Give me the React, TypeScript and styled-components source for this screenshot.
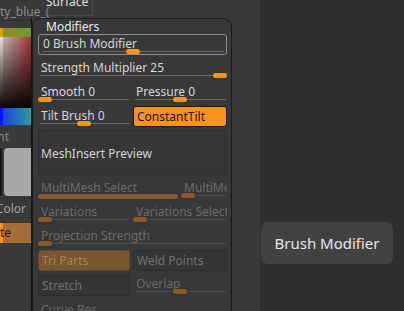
import React from "react";
import styled, { createGlobalStyle } from "styled-components";

const Global = createGlobalStyle`
  html, body {
    margin: 0;
    padding: 0;
    background: #303030;
  }
  body {
    font-family: "Noto Sans", "Open Sans", sans-serif;
    font-size: 12px;
  }
  * {
    box-sizing: border-box;
  }
`;

const Page = styled.div`
  position: relative;
  display: flex;
  width: 404px;
  height: 311px;
  overflow: hidden;
  background: #303030;
`;

const Workspace = styled.div`
  display: flex;
  flex-direction: column;
  width: 260px;
  height: 100%;
  background: #393939;
`;

const Canvas = styled.div`
  flex: 1;
  background: #2f2f2f;
`;

const TopBar = styled.div`
  display: flex;
  height: 18px;
  flex: none;
`;

const DocName = styled.div`
  width: 44px;
  padding-top: 5px;
  line-height: 14px;
  color: #8a8a8a;
  white-space: nowrap;
  position: relative;
  z-index: 1;
`;

const SurfaceTab = styled.div`
  width: 49px;
  height: 16px;
  border-right: 1px solid #4b4b4b;
  border-bottom: 1px solid #4b4b4b;
  overflow: hidden;
`;

const TabText = styled.span`
  display: block;
  margin-top: -5px;
  padding-left: 2px;
  line-height: 14px;
  color: #e0e0e0;
`;

const Body = styled.div`
  display: flex;
  flex: 1;
  min-height: 0;
`;

/* clipped palette peeking out on the left */
const Slice = styled.div`
  width: 32px;
  flex: none;
  display: flex;
  flex-direction: column;
  border-right: 1px solid #161616;
  overflow: hidden;
`;

const SliceRule = styled.div`
  margin-top: 2px;
  height: 8px;
  border-top: 1px solid #2c2c2c;
`;

const PickerBand = styled.div`
  height: 9px;
  background: linear-gradient(90deg, #d9a106 0 3px, #9a8a22 3px, #6f9b2f 100%);
`;

const SVField = styled.div`
  height: 71px;
  background: linear-gradient(180deg, rgba(0, 0, 0, 0) 0%, rgba(0, 0, 0, 0.55) 55%, #0c0404 100%),
    linear-gradient(90deg, #ecdcdc 0 3px, #c3b3b3 3px, #a83434 100%);
`;

const HueStrip = styled.div`
  height: 17px;
  background: linear-gradient(90deg, #0816ff 0 3px, #1c44d8 3px, #2b9ca2 100%);
`;

const SliceLabel = styled.div<{ $end: number; $tone?: string; $mt?: number }>`
  display: flex;
  justify-content: flex-end;
  width: ${(p) => p.$end}px;
  height: 14px;
  margin-top: ${(p) => p.$mt ?? 0}px;
  line-height: 14px;
  white-space: nowrap;
  color: ${(p) => p.$tone ?? "#8a8a8a"};
`;

const SwatchRow = styled.div`
  display: flex;
  gap: 2px;
  height: 48px;
  margin-top: 4px;
`;

const Swatch = styled.div<{ $fill: string; $w?: number }>`
  flex: ${(p) => (p.$w ? `0 0 ${p.$w}px` : 1)};
  background: ${(p) => p.$fill};
  border-radius: ${(p) => (p.$w ? "0 3px 3px 0" : "4px 0 0 4px")};
`;

const SliceDivider = styled.div`
  margin-top: 2px;
  height: 3px;
  border-top: 1px solid #2b2b2b;
`;

const SliceButton = styled.div`
  display: flex;
  height: 20px;
  margin-top: 7px;
  background: #a86d37;
  border-left: 3px solid #f7931e;
`;

const ButtonText = styled.div`
  display: flex;
  justify-content: flex-end;
  width: 8px;
  line-height: 20px;
  white-space: nowrap;
  color: #2a1a0b;
`;

/* the Modifiers palette */
const Panel = styled.div`
  width: 200px;
  flex: none;
  display: flex;
  flex-direction: column;
  background: #383838;
  border: 1px solid #1b1b1b;
  border-bottom: none;
  border-radius: 7px 9px 0 0;
`;

const PanelTitle = styled.div`
  height: 17px;
  padding: 1px 0 0 13px;
  line-height: 14px;
  color: #ececec;
`;

const Content = styled.div`
  display: flex;
  flex-direction: column;
  padding: 0 4px 0 5px;
`;

const BrushBox = styled.div`
  height: 21px;
  padding: 0 1px;
  border: 1px solid #8d8d8d;
  border-radius: 3px;
  display: flex;
  flex-direction: column;
`;

const Row = styled.div<{ $h?: number; $mt?: number }>`
  display: flex;
  flex-direction: column;
  height: ${(p) => p.$h ?? 24}px;
  margin-top: ${(p) => p.$mt ?? 0}px;
`;

const Split = styled.div<{ $cols?: string; $h?: number; $mt?: number }>`
  display: grid;
  grid-template-columns: ${(p) => p.$cols ?? "92px 94px"};
  column-gap: 3px;
  height: ${(p) => p.$h ?? 24}px;
  margin-top: ${(p) => p.$mt ?? 0}px;
`;

const Cell = styled.div`
  display: flex;
  flex-direction: column;
  min-width: 0;
`;

const Label = styled.div<{ $dim?: boolean }>`
  height: 16px;
  padding: 2px 0 0 3px;
  line-height: 14px;
  white-space: nowrap;
  overflow: hidden;
  color: ${(p) => (p.$dim ? "#6a6a6a" : "#d6d6d6")};
`;

const Track = styled.div<{ $dim?: boolean }>`
  position: relative;
  height: 5px;
  margin-top: -2px;
  &::before {
    content: "";
    position: absolute;
    left: 2px;
    right: 1px;
    top: 2px;
    height: 1px;
    background: ${(p) => (p.$dim ? "#4f4f4f" : "#686868")};
  }
`;

const Knob = styled.span<{ $dim?: boolean }>`
  position: absolute;
  top: 0;
  width: 14px;
  height: 5px;
  border-radius: 3px;
  background: ${(p) => (p.$dim ? "#8a5a2c" : "#f7931e")};
`;

const FullBar = styled.div`
  height: 5px;
  margin-top: -1px;
  border-radius: 3px;
  background: #8a5a2c;
`;

const Button = styled.div<{ $kind: "on" | "muted" | "off"; $mt?: number }>`
  height: 21px;
  margin-top: ${(p) => p.$mt ?? 0}px;
  padding-left: 3px;
  border-radius: 3px;
  line-height: 20px;
  white-space: nowrap;
  overflow: hidden;
  border: 1px solid
    ${(p) => (p.$kind === "on" ? "#1a1a1a" : p.$kind === "muted" ? "#684626" : "#2e2e2e")};
  background: ${(p) => (p.$kind === "on" ? "#f7931e" : p.$kind === "muted" ? "#7c5532" : "#353535")};
  color: ${(p) => (p.$kind === "on" ? "#1b1208" : p.$kind === "muted" ? "#a3835f" : "#717171")};
`;

const PreviewBox = styled.div`
  height: 45px;
  margin-top: -1px;
  padding: 1px 0 0 2px;
  display: flex;
  align-items: center;
  border: 1px solid #2e2e2e;
  border-radius: 4px;
  background: #363636;
  color: #d2d2d2;
`;

const Tooltip = styled.div`
  position: absolute;
  left: 261px;
  top: 222px;
  width: 132px;
  height: 42px;
  border-radius: 7px;
  background: #424242;
  color: #e8e8e8;
  font-size: 15px;
  display: flex;
  align-items: center;
  justify-content: center;
`;

type SliderProps = { label: string; frac: number; dim?: boolean };

const Slider = ({ label, frac, dim }: SliderProps) => (
  <>
    <Label $dim={dim}>{label}</Label>
    <Track $dim={dim}>
      <Knob $dim={dim} style={{ left: `calc(${frac} * (100% - 14px))` }} />
    </Track>
  </>
);

export default function App() {
  return (
    <>
      <Global />
      <Page>
        <Workspace>
          <TopBar>
            <DocName>ty_blue_(</DocName>
            <SurfaceTab>
              <TabText>Surface</TabText>
            </SurfaceTab>
          </TopBar>
          <Body>
            <Slice>
              <SliceRule />
              <PickerBand />
              <SVField />
              <HueStrip />
              <SliceLabel $end={9} $mt={5}>
                Gradient
              </SliceLabel>
              <SwatchRow>
                <Swatch $fill="#161616" $w={2} />
                <Swatch $fill="#a7a7a7" />
              </SwatchRow>
              <SliceDivider />
              <SliceLabel $end={26} $tone="#a2a2a2" $mt={1}>
                Color
              </SliceLabel>
              <SliceButton>
                <ButtonText>te</ButtonText>
              </SliceButton>
            </Slice>

            <Panel>
              <PanelTitle>Modifiers</PanelTitle>
              <Content>
                <BrushBox>
                  <Slider label="0 Brush Modifier" frac={0.5} />
                </BrushBox>

                <Row $mt={4}>
                  <Slider label="Strength Multiplier 25" frac={1} />
                </Row>

                <Split>
                  <Cell>
                    <Slider label="Smooth 0" frac={0} />
                  </Cell>
                  <Cell>
                    <Slider label="Pressure 0" frac={0.5} />
                  </Cell>
                </Split>

                <Split>
                  <Cell>
                    <Slider label="Tilt Brush 0" frac={0.5} />
                  </Cell>
                  <Cell>
                    <Button $kind="on" $mt={-1}>
                      ConstantTilt
                    </Button>
                  </Cell>
                </Split>

                <PreviewBox>MeshInsert Preview</PreviewBox>

                <Split $cols="140px 46px" $mt={4}>
                  <Cell>
                    <Label $dim>MultiMesh Select</Label>
                    <FullBar />
                  </Cell>
                  <Cell>
                    <Slider label="MultiMesh Select" frac={0} dim />
                  </Cell>
                </Split>

                <Split>
                  <Cell>
                    <Slider label="Variations" frac={0} dim />
                  </Cell>
                  <Cell>
                    <Slider label="Variations Select" frac={0} dim />
                  </Cell>
                </Split>

                <Row $h={23}>
                  <Slider label="Projection Strength" frac={0} dim />
                </Row>

                <Split $h={21}>
                  <Button $kind="muted">Tri Parts</Button>
                  <Button $kind="off">Weld Points</Button>
                </Split>

                <Split $h={21} $mt={4}>
                  <Button $kind="off">Stretch</Button>
                  <Cell>
                    <Slider label="Overlap" frac={0.5} dim />
                  </Cell>
                </Split>

                <Row $mt={5}>
                  <Label $dim>Curve Res</Label>
                </Row>
              </Content>
            </Panel>
          </Body>
        </Workspace>
        <Canvas />
        <Tooltip>Brush Modifier</Tooltip>
      </Page>
    </>
  );
}
